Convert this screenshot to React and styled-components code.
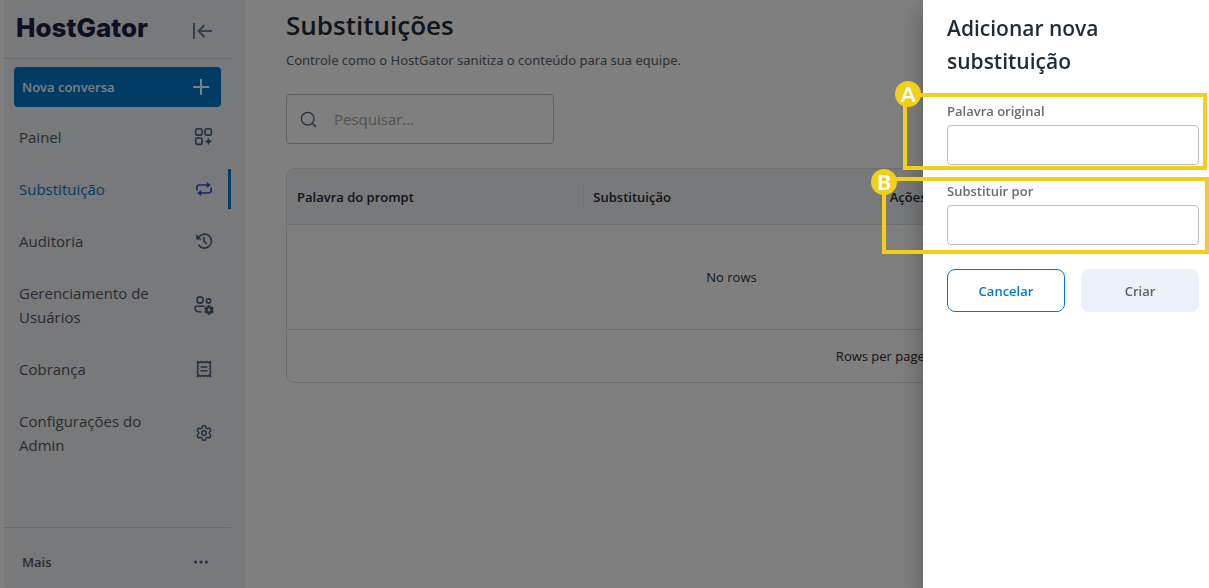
import React from 'react';
import styled, { createGlobalStyle } from 'styled-components';
import { Search, Settings } from 'lucide-react';

const GlobalStyle = createGlobalStyle`
  * {
    box-sizing: border-box;
  }

  body {
    margin: 0;
    background: #fff;
    color: #1f2a37;
    font-family: 'Open Sans', 'Noto Sans', sans-serif;
    font-size: 13px;
  }

  button, input, select {
    font: inherit;
  }
`;

const CollapseIcon = () => (
  <Icon viewBox="0 0 24 24" $bold>
    <path d="M3 4v16M21 12H8M13.5 6L7.500 12l6 6" />
  </Icon>
);

const PlusIcon = () => (
  <Icon viewBox="0 0 24 24" $bold>
    <path d="M12 4v16M4 12h16" />
  </Icon>
);

const DashboardIcon = () => (
  <Icon viewBox="0 0 24 24">
    <rect x="3.7" y="3.7" width="6.4" height="6.4" rx="1.8" />
    <rect x="13" y="3.7" width="6.4" height="6.4" rx="1.8" />
    <rect x="3.7" y="13" width="6.4" height="6.4" rx="1.8" />
    <path d="M16.4 12.600l1.200 2.600 2.600 1.200-2.600 1.200-1.200 2.600-1.200-2.600-2.600-1.200 2.600-1.200z" fill="currentColor" stroke="none" />
  </Icon>
);

const RepeatIcon = () => (
  <Icon viewBox="0 0 24 24">
    <path d="M4.8 13.5V11a3 3 0 0 1 3-3H16M19.2 10.5V13a3 3 0 0 1-3 3H8" />
    <path d="M14.8 5l4 3-4 3zM9.2 13l-4 3 4 3z" fill="currentColor" stroke="none" />
  </Icon>
);

const HistoryIcon = () => (
  <Icon viewBox="0 0 24 24">
    <path d="M6.4 8.6A7 7 0 1 1 6.4 15.6M12 8v4.4l2.8 2.6" />
    <path d="M4.2 5v5.4h5.4z" fill="currentColor" stroke="none" />
  </Icon>
);

const UsersIcon = () => (
  <Icon viewBox="0 0 24 24">
    <circle cx="8" cy="7" r="3.1" />
    <circle cx="16.6" cy="8" r="2.1" />
    <path d="M12.5 13.2H5a2 2 0 0 0-2 2c0 2.6 2.2 3.8 6.5 3.8" />
    <circle cx="17" cy="17" r="2.700" strokeWidth="2.600" />
    <path d="M17 12.200v2M17 19.800v2M12.800 14.600l1.800 1M19.400 18.400l1.800 1M12.800 19.400l1.800-1M19.400 15.600l1.800-1" strokeWidth="2.600" />
  </Icon>
);

const ReceiptIcon = () => (
  <Icon viewBox="0 0 24 24">
    <path d="M5.700 4.600l1.600 1 1.600-1 1.600 1 1.500-1 1.500 1 1.600-1 1.600 1 1.600-1v14.800l-1.600-1-1.600 1-1.600-1-1.500 1-1.500-1-1.600 1-1.600-1-1.600 1z" />
    <path d="M8.500 10h7M8.500 13.700h7" />
  </Icon>
);

const GearIcon = () => (
  <GearBox>
    <Settings size={18} strokeWidth={2} />
  </GearBox>
);

const DotsIcon = () => (
  <Icon viewBox="0 0 24 24">
    <g fill="currentColor" stroke="none">
      <circle cx="6.5" cy="12" r="1.6" />
      <circle cx="12" cy="12" r="1.6" />
      <circle cx="17.5" cy="12" r="1.6" />
    </g>
  </Icon>
);

const links = [
  { label: 'Painel', icon: <DashboardIcon /> },
  { label: 'Substituição', icon: <RepeatIcon />, active: true },
  { label: 'Auditoria', icon: <HistoryIcon /> },
  { label: 'Gerenciamento de Usuários', icon: <UsersIcon /> },
  { label: 'Cobrança', icon: <ReceiptIcon /> },
  { label: 'Configurações do Admin', icon: <GearIcon /> },
];

const columns = ['Palavra do prompt', 'Substituição', 'Ações'];

const Sidebar = () => (
  <SidebarContainer>
    <SidebarHeader>
      <Logo href="#">HostGator</Logo>
      <IconButton aria-label="Recolher menu"><CollapseIcon /></IconButton>
    </SidebarHeader>
    <NewChat>
      Nova conversa
      <PlusIcon />
    </NewChat>
    <Nav>
      {links.map((link) => (
        <NavLink href="#" key={link.label} $active={link.active}>
          <span>{link.label}</span>
          {link.icon}
        </NavLink>
      ))}
    </Nav>
    <MoreButton>
      Mais
      <DotsIcon />
    </MoreButton>
  </SidebarContainer>
);

const Replacements = () => (
  <Main>
    <Title>Substituições</Title>
    <Subtitle>Controle como o HostGator sanitiza o conteúdo para sua equipe.</Subtitle>
    <SearchBox>
      <Search size={19} strokeWidth={1.8} />
      <input type="search" aria-label="Pesquisar" placeholder="Pesquisar..." />
    </SearchBox>
    <TableCard>
      <Table>
        <thead>
          <tr>
            {columns.map((column) => <th key={column}><span>{column}</span></th>)}
          </tr>
        </thead>
        <tbody>
          <tr>
            <td colSpan={3}>No rows</td>
          </tr>
        </tbody>
      </Table>
      <TableFooter>
        <label htmlFor="page-size">Rows per page:</label>
        <select id="page-size" defaultValue="100">
          <option>100</option>
        </select>
        <span>0–0 of 0</span>
      </TableFooter>
    </TableCard>
  </Main>
);

const Drawer = () => (
  <DrawerContainer role="dialog" aria-labelledby="drawer-title">
    <DrawerTitle id="drawer-title">Adicionar nova substituição</DrawerTitle>
    <Field>
      <label htmlFor="original">Palavra original</label>
      <input id="original" type="text" />
      <Highlight $top={8} $left={44} $right={8}>
        <Marker $top={16} $left={12}>A</Marker>
      </Highlight>
    </Field>
    <Field>
      <label htmlFor="replacement">Substituir por</label>
      <input id="replacement" type="text" />
      <Highlight $top={4} $left={65} $right={10}>
        <Marker $top={12} $left={15}>B</Marker>
      </Highlight>
    </Field>
    <Actions>
      <Button $outlined>Cancelar</Button>
      <Button>Criar</Button>
    </Actions>
  </DrawerContainer>
);

const App = () => {
  return (
    <Page>
      <GlobalStyle />
      <Sidebar />
      <Replacements />
      <Backdrop />
      <Drawer />
    </Page>
  );
};

export default App;

// page
const Page = styled.div`
  display: flex;
  min-height: 100vh;
  padding-left: 4px;
`;

const Icon = styled.svg`
  flex: none;
  width: 24px;
  height: 24px;
  fill: none;
  stroke: currentColor;
  stroke-width: ${(props) => (props.$bold ? 2 : 1.6)};
`;

const GearBox = styled.span`
  display: grid;
  place-items: center;
  flex: none;
  width: 24px;
  height: 24px;
`;

// sidebar
const SidebarContainer = styled.aside`
  display: flex;
  flex-direction: column;
  flex: none;
  width: 242px;
  padding-right: 15px;
  background: #eff2f6;
  border-radius: 0 0 4px 4px;
`;

const SidebarHeader = styled.div`
  display: flex;
  align-items: flex-end;
  justify-content: space-between;
  height: 59px;
  padding: 0 16px 15px 12px;
  border-bottom: 1px solid #d4d6da;
`;

const Logo = styled.a`
  color: #1f1f42;
  font-family: Inter, sans-serif;
  font-size: 26px;
  font-weight: 800;
  line-height: 30px;
  text-decoration: none;
`;

const IconButton = styled.button`
  display: flex;
  padding: 0;
  border: 0;
  background: none;
  color: #6b7f96;
`;

const NewChat = styled.button`
  display: flex;
  align-items: center;
  justify-content: space-between;
  height: 40px;
  margin: 8px 10px 10px;
  padding: 0 8px;
  border: 0;
  border-radius: 4px;
  background: #0079cc;
  color: #fff;
  font-weight: 600;
`;

const Nav = styled.nav`
  display: flex;
  flex-direction: column;
  flex: 1;
  gap: 12px;
`;

const NavLink = styled.a`
  display: flex;
  align-items: center;
  justify-content: space-between;
  padding: 8px 12px 8px 15px;
  border-right: 3px solid ${(props) => (props.$active ? '#0079cc' : 'transparent')};
  color: ${(props) => (props.$active ? '#0079cc' : '#55585e')};
  font-size: 15px;
  line-height: 24px;
  text-decoration: none;

  span {
    max-width: 140px;
  }

  svg {
    color: ${(props) => (props.$active ? '#2b4bd8' : '#466080')};
  }
`;

const MoreButton = styled.button`
  display: flex;
  align-items: center;
  justify-content: space-between;
  height: 61px;
  padding: 8px 18px 0;
  border: 0;
  border-top: 1px solid #d4d6da;
  background: none;
  color: #55585e;
  font-weight: 600;

  svg {
    color: #466080;
  }
`;

// main content
const Main = styled.main`
  flex: 1;
  min-width: 0;
  padding: 4px 32px 24px 40px;
`;

const Title = styled.h1`
  margin: 0;
  font-size: 26px;
  font-weight: 600;
  line-height: 42px;
`;

const Subtitle = styled.p`
  margin: 4px 0 24px;
  color: #5b6069;
  font-family: 'Noto Sans', sans-serif;
  line-height: 20px;
`;

const SearchBox = styled.div`
  display: flex;
  align-items: center;
  gap: 16px;
  width: 268px;
  height: 50px;
  margin-bottom: 24px;
  padding: 0 12px;
  border: 1px solid #bdbdbd;
  border-radius: 4px;
  color: #4d6380;

  input {
    flex: 1;
    min-width: 0;
    padding: 0;
    border: 0;
    outline: 0;
    background: none;
    font-size: 15px;
  }

  input::placeholder {
    color: #a3a3a3;
  }
`;

const TableCard = styled.div`
  border: 1px solid #dcdee1;
  border-radius: 8px;
  overflow: hidden;
`;

const Table = styled.table`
  width: 100%;
  table-layout: fixed;
  border-collapse: separate;
  border-spacing: 0;

  th {
    height: 56px;
    padding: 0 0 0 10px;
    border-bottom: 1px solid #dcdee1;
    background: #eff2f6;
    font-weight: 600;
    text-align: left;
  }

  th + th {
    padding: 0;
  }

  th + th span {
    display: block;
    padding-left: 9px;
    border-left: 1px solid #e2e4e8;
    line-height: 24px;
  }

  td {
    height: 105px;
    border-bottom: 1px solid #dcdee1;
    text-align: center;
  }
`;

const TableFooter = styled.div`
  display: flex;
  align-items: center;
  justify-content: flex-end;
  height: 52px;
  gap: 24px;
  padding-right: 96px;

  select {
    width: 56px;
    border: 0;
    background: none;
  }
`;

const Backdrop = styled.div`
  position: fixed;
  inset: 0;
  background: rgba(0, 0, 0, 0.5);
`;

// drawer
const DrawerContainer = styled.section`
  position: fixed;
  top: 0;
  right: 0;
  bottom: 0;
  width: 286px;
  padding: 12px 10px 24px 24px;
  background: #fff;
  box-shadow: 0 8px 10px -5px rgba(0, 0, 0, 0.2), 0 16px 24px 2px rgba(0, 0, 0, 0.14),
    0 6px 30px 5px rgba(0, 0, 0, 0.12);
`;

const DrawerTitle = styled.h2`
  max-width: 200px;
  margin: 0 0 23px;
  font-size: 21px;
  font-weight: 600;
  line-height: 33px;
`;

const Field = styled.div`
  position: relative;
  margin-bottom: 16px;

  label {
    display: block;
    padding-bottom: 4px;
    color: #666a72;
    font-weight: 600;
    line-height: 20px;
  }

  input {
    display: block;
    width: 100%;
    height: 40px;
    padding: 0 12px;
    border: 1px solid #bdbdbd;
    border-radius: 4px;
  }
`;

const Highlight = styled.div`
  position: absolute;
  top: -${(props) => props.$top}px;
  left: -${(props) => props.$left}px;
  right: -${(props) => props.$right}px;
  height: 77px;
  border: 4px solid #f2d01a;
  pointer-events: none;
`;

const Marker = styled.span`
  position: absolute;
  top: -${(props) => props.$top}px;
  left: -${(props) => props.$left}px;
  width: 26px;
  height: 26px;
  border-radius: 50%;
  background: #f2d01a;
  color: #fff;
  font-family: Lato, sans-serif;
  font-size: 21px;
  font-weight: 900;
  line-height: 26px;
  text-align: center;
`;

const Actions = styled.div`
  display: flex;
  gap: 16px;
  margin-top: 24px;
`;

const Button = styled.button`
  flex: 1;
  height: 43px;
  border: 1px solid ${(props) => (props.$outlined ? '#0079cc' : '#ecf0fa')};
  border-radius: 8px;
  background: ${(props) => (props.$outlined ? '#fff' : '#ecf0fa')};
  color: ${(props) => (props.$outlined ? '#0079cc' : '#5c5f66')};
  font-weight: 600;
`;
